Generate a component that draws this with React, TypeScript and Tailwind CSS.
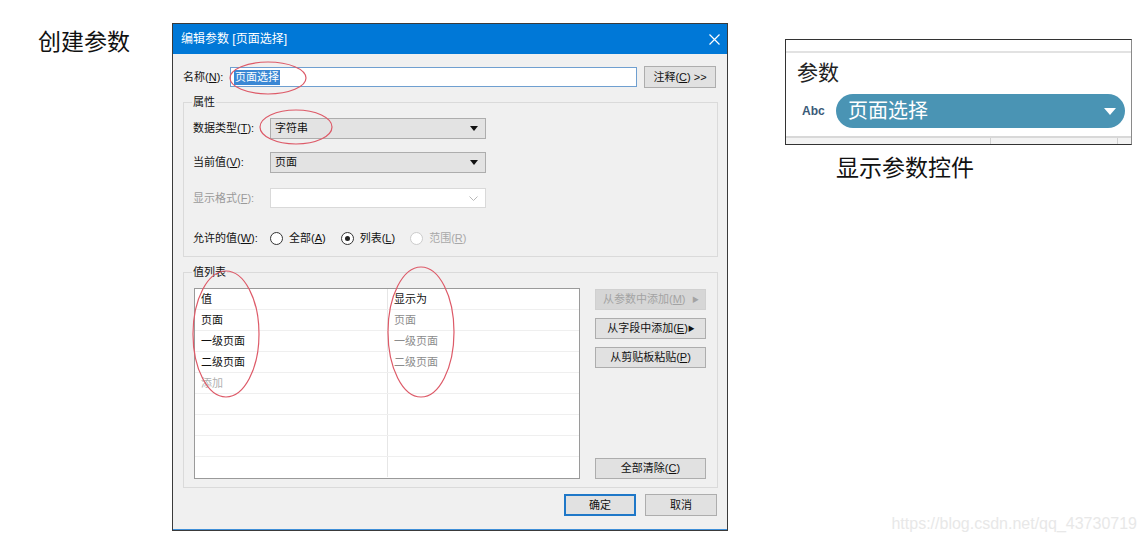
import React from 'react';

const font = "font-['Liberation_Sans','Noto_Sans_CJK_SC',sans-serif]";

function Acc({ text, k, colon = true }: { text: string; k: string; colon?: boolean }) {
  return (
    <span>
      {text}(<u className="underline-offset-[1px]">{k}</u>){colon ? ':' : ''}
    </span>
  );
}

function Caret() {
  return (
    <svg width="8" height="5" viewBox="0 0 8 5">
      <path d="M0 0H8L4 5Z" fill="#111" />
    </svg>
  );
}

function Select({ value }: { value: string }) {
  return (
    <div className="w-[216px] h-[21px] border border-[#adadad] bg-[#e3e3e3] flex items-center justify-between pl-[4px] pr-[7px]">
      <span>{value}</span>
      <Caret />
    </div>
  );
}

function Radio({ checked, disabled }: { checked?: boolean; disabled?: boolean }) {
  return (
    <span
      className={`w-[13px] h-[13px] rounded-full border bg-white flex items-center justify-center ${
        disabled ? 'border-[#cccccc]' : 'border-[#333333]'
      }`}
    >
      {checked && <span className="w-[5px] h-[5px] rounded-full bg-[#222]" />}
    </span>
  );
}

function Btn({ children, className = '' }: { children: React.ReactNode; className?: string }) {
  return (
    <div className={`h-[21px] border border-[#adadad] bg-[#e1e1e1] flex items-center justify-center ${className}`}>
      {children}
    </div>
  );
}

const rows: { v: string; d: string; muted?: boolean }[] = [
  { v: '页面', d: '页面' },
  { v: '一级页面', d: '一级页面' },
  { v: '二级页面', d: '二级页面' },
  { v: '添加', d: '', muted: true },
  { v: '', d: '' },
  { v: '', d: '' },
  { v: '', d: '' },
  { v: '', d: '' },
];

function Dialog() {
  return (
    <div className="mt-[23px] w-[556px] h-[508px] border border-[#3a3a3a] bg-[#f0f0f0] flex flex-col text-[11px] text-[#111] leading-none">
      {/* title bar */}
      <div className="h-[30px] bg-[#0078d7] flex items-center justify-between pl-[8px] pr-[7px] text-white text-[12px]">
        <span>编辑参数 [页面选择]</span>
        <svg width="11" height="11" viewBox="0 0 11 11">
          <path d="M0.5 0.5L10.5 10.5M10.5 0.5L0.5 10.5" stroke="#fff" strokeWidth="1.2" />
        </svg>
      </div>

      <div className="flex-1 pl-[10px] pr-[9px] flex flex-col border-b border-[#3f8fd8]">
        {/* name */}
        <div className="mt-[12px] h-[22px] flex items-center">
          <span className="w-[47px]">
            <Acc text="名称" k="N" />
          </span>
          <div className="w-[407px] h-[20px] border border-[#6f9fd0] bg-white flex items-center pl-[3px]">
            <span className="bg-[#3a87d4] text-white px-[1px] py-[2px]">页面选择</span>
          </div>
          <Btn className="ml-[7px] w-[72px] h-[22px]">
            <span>
              注释(<u>C</u>) &gt;&gt;
            </span>
          </Btn>
        </div>

        {/* properties */}
        <fieldset className="mt-[7px] w-[535px] border border-[#dadada] pl-[9px] pb-[8px]">
          <legend className="px-[1px] -ml-[1px] leading-[14px]">属性</legend>
          <div className="mt-[9px] flex items-center h-[21px]">
            <span className="w-[77px]">
              <Acc text="数据类型" k="T" />
            </span>
            <Select value="字符串" />
          </div>
          <div className="mt-[12px] flex items-center h-[22px]">
            <span className="w-[77px]">
              <Acc text="当前值" k="V" />
            </span>
            <Select value="页面" />
          </div>
          <div className="mt-[15px] flex items-center h-[20px] text-[#9a9a9a]">
            <span className="w-[77px]">
              <Acc text="显示格式" k="F" />
            </span>
            <div className="w-[216px] h-[20px] border border-[#d9d9d9] bg-white flex items-center justify-end pr-[7px]">
              <svg width="9" height="5" viewBox="0 0 9 5">
                <path d="M0.5 0.5L4.5 4.5L8.5 0.5" stroke="#b8b8b8" fill="none" />
              </svg>
            </div>
          </div>
          <div className="mt-[20px] flex items-center h-[20px]">
            <span className="w-[77px]">
              <Acc text="允许的值" k="W" />
            </span>
            <Radio />
            <span className="ml-[6px]">
              <Acc text="全部" k="A" colon={false} />
            </span>
            <span className="ml-[15px]">
              <Radio checked />
            </span>
            <span className="ml-[6px]">
              <Acc text="列表" k="L" colon={false} />
            </span>
            <span className="ml-[15px]">
              <Radio disabled />
            </span>
            <span className="ml-[6px] text-[#a8a8a8]">
              <Acc text="范围" k="R" colon={false} />
            </span>
          </div>
        </fieldset>

        {/* value list */}
        <fieldset className="mt-[8px] w-[535px] border border-[#dadada] pl-[10px] pb-[8px]">
          <legend className="px-[1px] -ml-[2px] leading-[14px]">值列表</legend>
          <div className="mt-[9px] flex">
            <div className="w-[386px] h-[191px] border border-[#9a9a9a] bg-white flex flex-col overflow-hidden">
              <div className="h-[20px] flex items-center shrink-0">
                <span className="w-[193px] pl-[6px] border-r border-[#e6e6e6] h-full flex items-center">值</span>
                <span className="pl-[6px]">显示为</span>
              </div>
              {rows.map((r, i) => (
                <div key={i} className="h-[21px] flex items-center shrink-0 border-t border-[#efefef]">
                  <span
                    className={`w-[193px] pl-[6px] border-r border-[#e6e6e6] h-full flex items-center ${
                      r.muted ? 'text-[#b0b0b0]' : ''
                    }`}
                  >
                    {r.v}
                  </span>
                  <span className="pl-[6px] text-[#8c8c8c]">{r.d}</span>
                </div>
              ))}
            </div>
            <div className="ml-[15px] w-[111px] h-[191px] flex flex-col pt-[1px]">
              <div className="h-[21px] bg-[#d6d6d6] border border-[#d0d0d0] text-[#a3a3a3] flex items-center justify-between pl-[7px] pr-[6px]">
                <Acc text="从参数中添加" k="M" colon={false} />
                <span className="text-[7px]">▶</span>
              </div>
              <Btn className="mt-[8px] justify-between pl-[7px] pr-[6px]">
                <Acc text="从字段中添加" k="E" colon={false} />
                <span className="text-[7px]">▶</span>
              </Btn>
              <Btn className="mt-[8px]">
                <Acc text="从剪贴板粘贴" k="P" colon={false} />
              </Btn>
              <Btn className="mt-auto">
                <Acc text="全部清除" k="C" colon={false} />
              </Btn>
            </div>
          </div>
        </fieldset>

        {/* actions */}
        <div className="mt-[6px] flex justify-end pr-[1px] gap-[9px]">
          <div className="w-[72px] h-[22px] border-2 border-[#1f78c8] bg-[#e1e1e1] flex items-center justify-center">
            确定
          </div>
          <Btn className="w-[72px] h-[22px]">取消</Btn>
        </div>
      </div>
    </div>
  );
}

function ControlPreview() {
  return (
    <div className="ml-[57px] mt-[39px] flex flex-col">
      <div className="w-[347px] h-[106px] border border-[#333] border-r-[#8a8a8a] bg-white flex flex-col">
        <div className="h-[13px] border-b-2 border-[#e2e2e2] shrink-0" />
        <div className="pl-[11px] mt-[9px] text-[21px] leading-none text-[#222]">参数</div>
        <div className="mt-[11px] flex items-center pl-[16px] pr-[6px]">
          <span className="w-[34px] text-[12px] font-bold text-[#3a5a78] font-['Liberation_Sans',sans-serif]">Abc</span>
          <div className="flex-1 h-[34px] rounded-full bg-[#4a94b4] flex items-center justify-between pl-[12px] pr-[9px] text-white text-[20px] leading-none">
            <span>页面选择</span>
            <svg width="12" height="7" viewBox="0 0 12 7">
              <path d="M0 0H12L6 7Z" fill="#fff" />
            </svg>
          </div>
        </div>
        <div className="mt-auto h-[8px] border-t-2 border-[#d8d8d8] bg-[#f3f3f3] flex">
          <div className="w-[205px] border-r border-[#d0d0d0]" />
          <div className="w-[127px] border-r border-[#d0d0d0]" />
        </div>
      </div>
      <div className="ml-[51px] mt-[12px] text-[23px] leading-none text-[#111]">显示参数控件</div>
    </div>
  );
}

export default function App() {
  return (
    <div className={`relative w-[1146px] h-[543px] bg-white overflow-hidden flex ${font}`}>
      <div className="w-[172px] shrink-0 pl-[38px] pt-[31px] text-[23px] leading-none text-[#111]">创建参数</div>
      <Dialog />
      <ControlPreview />

      {/* annotation marks */}
      <svg className="absolute inset-0 pointer-events-none" width="1146" height="543">
        <g fill="none" stroke="#dd5a68" strokeWidth="1.2">
          <ellipse cx="268" cy="78" rx="38" ry="16" />
          <ellipse cx="296" cy="127" rx="36" ry="17" />
          <ellipse cx="226" cy="334" rx="33" ry="63" />
          <ellipse cx="421" cy="332" rx="33" ry="65" />
        </g>
      </svg>

      <div className="absolute right-[9px] bottom-[11px] text-[16px] leading-none text-[#e8e8e8] font-['Liberation_Sans',sans-serif]">
        https://blog.csdn.net/qq_43730719
      </div>
    </div>
  );
}
